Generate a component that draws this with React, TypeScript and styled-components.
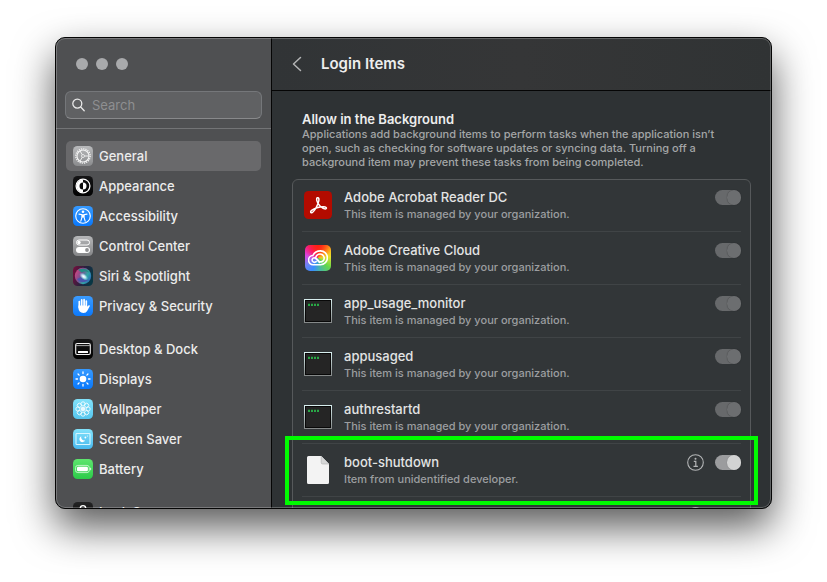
import React from "react";
import styled, { createGlobalStyle, css } from "styled-components";

const GlobalStyle = createGlobalStyle`
  *, *::before, *::after { box-sizing: border-box; }
  body {
    margin: 0;
    background: #fff;
    font-family: Inter, "Liberation Sans", sans-serif;
    font-size: 13px;
    line-height: 16px;
    color: #e3e4e4;
  }
  button, input { font: inherit; color: inherit; }
`;

const Desktop = styled.div`
  display: flex;
  height: 100vh;
  padding: 37px 55px 73px;
  overflow: hidden;
`;

const Window = styled.div`
  position: relative;
  flex: 1;
  display: flex;
  min-width: 0;
  border: 1px solid #050505;
  border-radius: 10px;
  overflow: hidden;
  background: #2e3234;
  box-shadow: 0 18px 40px rgba(0, 0, 0, 0.66);

  &::after {
    content: "";
    position: absolute;
    inset: 0;
    border: 1px solid rgba(255, 255, 255, 0.24);
    border-radius: 9px;
    pointer-events: none;
  }
`;

const Sidebar = styled.aside`
  flex: none;
  display: flex;
  flex-direction: column;
  width: 216px;
  border-right: 1px solid #050505;
  background: #4f5052;
  overflow: hidden;
`;

const SidebarTop = styled.div`
  flex: none;
  padding: 20px 9px 9px;
  border-bottom: 1px solid #737476;
`;

const TrafficLights = styled.div`
  display: flex;
  gap: 8px;
  padding: 0 11px;
  margin-bottom: 21px;
`;

const Light = styled.button`
  width: 12px;
  height: 12px;
  padding: 0;
  border: 0;
  border-radius: 50%;
  background: #a9aaac;
`;

const SearchField = styled.label`
  display: flex;
  align-items: center;
  gap: 7px;
  height: 28px;
  padding: 0 6px;
  border: 1px solid #75777a;
  border-bottom-color: #88898b;
  border-radius: 6px;
  background: #606163;

  svg { flex: none; }
`;

const SearchInput = styled.input`
  flex: 1;
  min-width: 0;
  padding: 0;
  border: 0;
  outline: 0;
  background: none;

  &::placeholder { color: #8e8f91; opacity: 1; }
`;

const Nav = styled.nav`
  flex: 1;
  display: flex;
  flex-direction: column;
  gap: 13px;
  min-height: 0;
  padding: 12px 10px 0;
  overflow: hidden;
`;

const NavGroup = styled.div`
  flex: none;
`;

const NavLink = styled.a<{ $selected?: boolean }>`
  display: flex;
  align-items: center;
  gap: 6px;
  height: 30px;
  padding: 0 7px;
  border-radius: 5px;
  color: #ececec;
  text-decoration: none;
  font-weight: 500;
  white-space: nowrap;
  ${(p) => p.$selected && css`background: #69696b;`}
`;

const Main = styled.main`
  flex: 1;
  display: flex;
  flex-direction: column;
  min-width: 0;
`;

const Header = styled.header`
  flex: none;
  display: flex;
  align-items: center;
  gap: 15px;
  height: 53px;
  padding: 0 16px;
  border-bottom: 1px solid #050505;
  background: linear-gradient(90deg, #313436, #353637 50%, #303334);
`;

const BackButton = styled.button`
  display: flex;
  align-items: center;
  justify-content: center;
  width: 18px;
  height: 24px;
  padding: 0;
  border: 0;
  background: none;
`;

const Title = styled.h1`
  margin: 0;
  font-size: 15px;
  font-weight: 600;
  line-height: 20px;
  color: #ededed;
`;

const Content = styled.section`
  flex: 1;
  min-height: 0;
  padding: 20px 20px 0;
  overflow: hidden;
`;

const Intro = styled.div`
  padding: 0 10px;
  margin-bottom: 10px;
`;

const SectionTitle = styled.h2`
  margin: 0;
  font-size: 13px;
  font-weight: 600;
  line-height: 16px;
  color: #ededed;
`;

const Description = styled.p`
  margin: 0;
  font-size: 11px;
  font-weight: 500;
  line-height: 14px;
  color: #a4a6a7;
`;

const List = styled.ul`
  margin: 0;
  padding: 0 9px;
  list-style: none;
  border: 1px solid #56595b;
  border-radius: 6px;
  background: #323638;
`;

const Row = styled.li`
  position: relative;
  display: flex;
  gap: 11px;
  height: 53px;
  padding: 10px 0 0 1px;
  border-bottom: 1px solid #404446;

  &:first-child {
    height: 52px;
    padding-top: 9px;
  }
`;

const IconSlot = styled.div`
  flex: none;
  display: flex;
  justify-content: center;
  width: 30px;
  height: 32px;
  align-items: center;
`;

const RowText = styled.div`
  flex: 1;
  min-width: 0;
  white-space: nowrap;
`;

const RowName = styled.div`
  line-height: 17px;
  font-weight: 500;
`;

const RowNote = styled.div`
  font-size: 11px;
  font-weight: 500;
  line-height: 16px;
  color: #9c9ea0;
`;

const Controls = styled.div`
  display: flex;
  align-items: center;
  gap: 11px;
  height: 17px;
`;

const InfoButton = styled.button`
  display: flex;
  padding: 0;
  border: 0;
  background: none;
`;

const Toggle = styled.input`
  appearance: none;
  display: flex;
  justify-content: flex-end;
  width: 26px;
  height: 15px;
  margin: 0;
  border-radius: 8px;
  background: #9b9c9e;

  &::before {
    content: "";
    width: 14px;
    height: 15px;
    border-radius: 8px;
    background: #d2d3d3;
    box-shadow: 0 0 1px rgba(0, 0, 0, 0.3);
  }

  &:disabled { background: #67696b; }
  &:disabled::before { background: #6c6e70; box-shadow: 0 0 1px rgba(0, 0, 0, 0.5); }
`;

const Highlight = styled.div`
  position: absolute;
  inset: -8px -17px -9px;
  border: 4px solid #00fb00;
  pointer-events: none;
`;

type TileProps = { id: string; from: string; to: string; children: React.ReactNode };

const Tile = ({ id, from, to, children }: TileProps) => (
  <svg width="20" height="20" viewBox="0 0 20 20" fill="none" aria-hidden="true">
    <defs>
      <linearGradient id={id} x1="0" y1="0" x2="0" y2="1">
        <stop offset="0" stopColor={from} />
        <stop offset="1" stopColor={to} />
      </linearGradient>
    </defs>
    <rect width="20" height="20" rx="4.5" fill={`url(#${id})`} />
    {children}
  </svg>
);

const spin = (n: number) => Array.from({ length: n }, (_, i) => (360 / n) * i);

const GearIcon = () => (
  <Tile id="gear" from="#b9babc" to="#8a8b8d">
    <circle cx="10" cy="10" r="7.2" stroke="#f4f4f4" strokeWidth="1.3" strokeDasharray="1.2 1.06" />
    <circle cx="10" cy="10" r="6" stroke="#f4f4f4" strokeWidth="1.1" />
    <circle cx="10" cy="10" r="1.5" stroke="#f4f4f4" strokeWidth="0.8" />
    <path d="M11.5 10h4.5M9.2 8.7 7 4.8M9.2 11.3 7 15.2" stroke="#f4f4f4" strokeWidth="0.9" />
  </Tile>
);

const AppearanceIcon = () => (
  <Tile id="appearance" from="#151516" to="#020202">
    <circle cx="10" cy="10" r="6.9" stroke="#fff" strokeWidth="1.3" />
    <path d="M10 3.5a6.5 6.5 0 0 0 0 13v-3a3.5 3.5 0 0 1 0-7z" fill="#fff" />
    <path d="M10 6.5a3.5 3.5 0 0 1 0 7z" fill="#fff" />
  </Tile>
);

const AccessibilityIcon = () => (
  <Tile id="accessibility" from="#369aff" to="#0a78fb">
    <circle cx="10" cy="10" r="7.3" stroke="#fff" strokeWidth="1.1" />
    <circle cx="10" cy="5.8" r="1.3" fill="#fff" />
    <path d="M6 8.1l3 .6v2.4l-1.2 4M14 8.1l-3 .6v2.4l1.2 4" stroke="#fff" strokeWidth="1.1" strokeLinecap="round" />
    <path d="M8.7 8.4h2.6v3.2H8.7z" fill="#fff" />
  </Tile>
);

const ControlCenterIcon = () => (
  <Tile id="control" from="#b5b6b8" to="#858688">
    <rect x="3.5" y="4" width="13" height="5" rx="2.5" stroke="#fff" strokeWidth="1" />
    <circle cx="6" cy="6.5" r="1.7" fill="#fff" />
    <rect x="3" y="11" width="14" height="6" rx="3" fill="#fff" />
    <circle cx="14" cy="14" r="1.9" fill="#909193" />
  </Tile>
);

const SiriIcon = () => (
  <svg width="20" height="20" viewBox="0 0 20 20" aria-hidden="true">
    <defs>
      <linearGradient id="siri-bg" x1="0" y1="0" x2="1" y2="0.3">
        <stop offset="0" stopColor="#7a0c3c" />
        <stop offset="0.6" stopColor="#27223f" />
        <stop offset="1" stopColor="#093644" />
      </linearGradient>
      <linearGradient id="siri-orb" x1="0" y1="0.2" x2="1" y2="0.7">
        <stop offset="0" stopColor="#d8467f" />
        <stop offset="0.4" stopColor="#7b4f91" />
        <stop offset="0.7" stopColor="#2fa8a5" />
        <stop offset="1" stopColor="#2d63bd" />
      </linearGradient>
      <radialGradient id="siri-glow">
        <stop offset="0" stopColor="#fff" />
        <stop offset="0.4" stopColor="#d8f4ff" stopOpacity="0.85" />
        <stop offset="1" stopColor="#7bd3ee" stopOpacity="0" />
      </radialGradient>
    </defs>
    <rect width="20" height="20" rx="4.5" fill="url(#siri-bg)" />
    <circle cx="10" cy="10" r="8.2" fill="url(#siri-orb)" />
    <path d="M5 3.8c5-2.6 10-.2 11.5 3.2-3-2-6-2-7.5-.2z" fill="#268b85" />
    <path d="M4 13c3.5 4.5 8.5 4 11.5.5-3 .8-6-.4-7-2.6z" fill="#4c55ad" />
    <ellipse cx="10.7" cy="10.5" rx="5.2" ry="3" transform="rotate(38 10.7 10.5)" fill="url(#siri-glow)" />
  </svg>
);

const HandIcon = () => (
  <Tile id="privacy" from="#3b9cff" to="#0c79fb">
    <path d="M6.3 5.5v6M8.7 3.9v6M11.1 3.7v6M13.3 5v6" stroke="#fff" strokeWidth="1.7" strokeLinecap="round" />
    <path d="M5.45 9.5h8.7v1.3l1.3-1.3c.8-.7 1.7 0 1.3.8l-2.3 4.2c-.9 1.7-2.2 2.5-4.1 2.5-3 0-4.9-1.9-4.9-4.9z" fill="#fff" />
  </Tile>
);

const DockIcon = () => (
  <Tile id="dock" from="#161617" to="#020202">
    <rect x="2.7" y="4.5" width="14.6" height="11" rx="1.5" stroke="#f1f1f1" strokeWidth="1.1" />
    <path d="M3 6.6h14" stroke="#a5a5a5" strokeWidth="1" />
    <rect x="5" y="12" width="10" height="2" rx="0.5" fill="#fff" />
  </Tile>
);

const DisplaysIcon = () => (
  <Tile id="displays" from="#369aff" to="#0a78fb">
    <circle cx="10" cy="10" r="3.3" fill="#fff" />
    {spin(8).map((a) => (
      <path key={a} d="M10 3v1.5" transform={`rotate(${a} 10 10)`} stroke="#fff" strokeWidth="1.3" strokeLinecap="round" />
    ))}
  </Tile>
);

const WallpaperIcon = () => (
  <Tile id="wallpaper" from="#82e2fa" to="#56c6ee">
    {spin(8).map((a) => (
      <circle key={a} cx="10" cy="4.9" r="2.1" transform={`rotate(${a} 10 10)`} stroke="#f3fcff" strokeWidth="0.9" />
    ))}
    <circle cx="10" cy="10" r="2.3" fill="#fff" fillOpacity="0.85" />
  </Tile>
);

const ScreenSaverIcon = () => (
  <Tile id="saver" from="#82e2fa" to="#48b8ee">
    <rect x="3" y="4.5" width="14" height="11" rx="0.8" stroke="#d8f6ff" strokeWidth="1.1" />
    <path d="M8.2 7.2a3.1 3.1 0 1 0 4 4.3 3.5 3.5 0 0 1-4-4.3z" fill="#fff" />
    <circle cx="12.4" cy="8.5" r="0.9" fill="#fff" />
    <circle cx="14.3" cy="7" r="0.5" fill="#fff" />
  </Tile>
);

const BatteryIcon = () => (
  <Tile id="battery" from="#5ee56e" to="#2ccb49">
    <rect x="2.6" y="6.4" width="13.6" height="7.2" rx="2.2" stroke="#c8f6ce" strokeWidth="0.9" />
    <rect x="4" y="7.7" width="10.9" height="4.6" rx="1.2" fill="#fff" />
    <path d="M17.1 8.7c.9.4.9 2.2 0 2.6z" fill="#e6fbe9" stroke="#e6fbe9" strokeWidth="0.5" />
  </Tile>
);

const LockIcon = () => (
  <Tile id="lock" from="#242425" to="#050505">
    <path d="M7.3 9V6.3a2.7 2.7 0 0 1 5.4 0V9" stroke="#fff" strokeWidth="1.4" />
    <rect x="5.5" y="9" width="9" height="7" rx="1.2" fill="#fff" />
  </Tile>
);

const AcrobatIcon = () => (
  <svg width="28" height="28" viewBox="0 0 28 28" fill="none" aria-hidden="true">
    <rect width="28" height="28" rx="4.5" fill="#b30b00" />
    <path
      d="M13.3 6.700c1.800-.5 2.300 2.200.6 6.100-1.500 3.600-4 8.200-6 8.900-1.300.4-1.800-.9-.6-2.100 2.500-2.300 8.300-4.200 12.700-3.900 2.700.2 3.200 2.200 1.200 2.200-3 0-7.400-4.200-8.300-8.100-.4-1.700-.2-2.900.4-3.100z"
      stroke="#fff"
      strokeWidth="1.5"
      strokeLinejoin="round"
    />
  </svg>
);

const CloudArt = styled.div`
  display: flex;
  align-items: center;
  justify-content: center;
  width: 26px;
  height: 26px;
  border-radius: 5px;
  background:
    radial-gradient(circle at 50% 0, #ff1c16 0, rgba(255, 28, 22, 0) 50%),
    conic-gradient(from 0deg, #ff3b16, #ffb51c 50deg, #e7e32c 85deg, #63d84b 130deg, #4bbb9b 165deg, #388eff 205deg, #7181f4 240deg, #d849e2 280deg, #f51c92 320deg, #ff3b16);
`;

const CreativeCloudIcon = () => (
  <CloudArt>
    <svg width="20" height="16" viewBox="0 0 20 16" fill="none" stroke="#fff" strokeWidth="1.6" strokeLinecap="round" aria-hidden="true">
      <path d="M5.400 14.700a4.600 4.600 0 0 1-.5-9.200C6.300 2.700 9.200.9 12.500.9a6.700 6.700 0 0 1 0 13.800z" />
      <path d="M8.200 11.700a2.600 2.600 0 0 1-3 .2 2.200 2.200 0 0 1 .9-4.100c1 0 1.700.6 2.400 1.400l3 3.200" />
      <path d="M8 6.600c1-2.100 3.800-3.300 6-2.100 2.400 1.300 2.900 4.400 1.100 6.400-1.300 1.400-3.200 1.300-4.400.1L7.500 7.600" />
    </svg>
  </CloudArt>
);

const ExecIcon = () => (
  <svg width="28" height="24" viewBox="0 0 28 24" fill="none" aria-hidden="true">
    <defs>
      <linearGradient id="exec-frame" x1="0" y1="0" x2="0" y2="1">
        <stop offset="0" stopColor="#d7eeee" />
        <stop offset="1" stopColor="#858989" />
      </linearGradient>
    </defs>
    <rect x="0.5" y="0.5" width="27" height="23" fill="#1d1f20" stroke="url(#exec-frame)" />
    <rect x="1.5" y="1.5" width="25" height="21" fill="#252525" stroke="#080808" />
    <path d="M4 6h11" stroke="#29a746" strokeWidth="2" strokeDasharray="2 1" />
    <path d="M4.500 4.500h10" stroke="#1a6d2e" strokeWidth="1" strokeDasharray="1 2" />
  </svg>
);

const DocumentIcon = () => (
  <svg width="22" height="28" viewBox="0 0 22 28" aria-hidden="true">
    <path d="M1.500 0h12.700L22 8v18.500a1.500 1.500 0 0 1-1.500 1.500h-19A1.500 1.500 0 0 1 0 26.500v-25A1.500 1.500 0 0 1 1.500 0z" fill="#f3f3f3" />
    <path d="M14.200 0v6.500A1.500 1.500 0 0 0 15.700 8H22z" fill="#d6d7d7" />
    <path d="M14.200 0v6.500A1.500 1.500 0 0 0 15.700 8H22" fill="none" stroke="#aeb0b0" strokeWidth="0.6" />
  </svg>
);

const navGroups = [
  [
    { name: "General", Icon: GearIcon },
    { name: "Appearance", Icon: AppearanceIcon },
    { name: "Accessibility", Icon: AccessibilityIcon },
    { name: "Control Center", Icon: ControlCenterIcon },
    { name: "Siri & Spotlight", Icon: SiriIcon },
    { name: "Privacy & Security", Icon: HandIcon },
  ],
  [
    { name: "Desktop & Dock", Icon: DockIcon },
    { name: "Displays", Icon: DisplaysIcon },
    { name: "Wallpaper", Icon: WallpaperIcon },
    { name: "Screen Saver", Icon: ScreenSaverIcon },
    { name: "Battery", Icon: BatteryIcon },
  ],
  [{ name: "Lock Screen", Icon: LockIcon }],
];

const managed = "This item is managed by your organization.";

type Item = { name: string; note: string; Icon: React.FC; own?: boolean; marked?: boolean };

const items: Item[] = [
  { name: "Adobe Acrobat Reader DC", note: managed, Icon: AcrobatIcon },
  { name: "Adobe Creative Cloud", note: managed, Icon: CreativeCloudIcon },
  { name: "app_usage_monitor", note: managed, Icon: ExecIcon },
  { name: "appusaged", note: managed, Icon: ExecIcon },
  { name: "authrestartd", note: managed, Icon: ExecIcon },
  { name: "boot-shutdown", note: "Item from unidentified developer.", Icon: DocumentIcon, own: true, marked: true },
  { name: "", note: "", Icon: DocumentIcon, own: true },
];

const ItemRow = ({ name, note, Icon, own, marked }: Item) => (
  <Row>
    <IconSlot><Icon /></IconSlot>
    <RowText>
      <RowName>{name}</RowName>
      <RowNote>{note}</RowNote>
    </RowText>
    <Controls>
      {own && (
        <InfoButton aria-label={`About ${name || "item"}`}>
          <svg width="17" height="17" viewBox="0 0 17 17" fill="none" stroke="#b3b5b6" aria-hidden="true">
            <circle cx="8.5" cy="8.5" r="7.8" strokeWidth="1.1" />
            <path d="M6.8 7.3h2v4.9M6.5 12.3h4.4" strokeWidth="1.2" />
            <circle cx="8.5" cy="4.8" r="1" fill="#b3b5b6" stroke="none" />
          </svg>
        </InfoButton>
      )}
      <Toggle type="checkbox" role="switch" defaultChecked disabled={!own} aria-label={`Allow ${name || "item"}`} />
    </Controls>
    {marked && <Highlight />}
  </Row>
);

export default function App() {
  return (
    <>
      <GlobalStyle />
      <Desktop>
        <Window>
          <Sidebar>
            <SidebarTop>
              <TrafficLights>
                <Light aria-label="Close" />
                <Light aria-label="Minimize" />
                <Light aria-label="Zoom" />
              </TrafficLights>
              <SearchField>
                <svg width="13" height="14" viewBox="0 0 13 14" fill="none" stroke="#e8e8e8" strokeWidth="1.3" strokeLinecap="round" aria-hidden="true">
                  <circle cx="5.3" cy="5.6" r="4.5" />
                  <path d="M8.7 9l3.5 3.7" />
                </svg>
                <SearchInput type="text" placeholder="Search" aria-label="Search" />
              </SearchField>
            </SidebarTop>
            <Nav>
              {navGroups.map((group) => (
                <NavGroup key={group[0].name}>
                  {group.map(({ name, Icon }) => (
                    <NavLink key={name} href="#" $selected={name === "General"}>
                      <Icon />
                      {name}
                    </NavLink>
                  ))}
                </NavGroup>
              ))}
            </Nav>
          </Sidebar>
          <Main>
            <Header>
              <BackButton aria-label="Back">
                <svg width="10" height="16" viewBox="0 0 10 16" fill="none" stroke="#b3b4b5" strokeWidth="1.5" strokeLinecap="round" strokeLinejoin="round" aria-hidden="true">
                  <path d="M8.5 1.5 1.5 8l7 6.5" />
                </svg>
              </BackButton>
              <Title>Login Items</Title>
            </Header>
            <Content>
              <Intro>
                <SectionTitle>Allow in the Background</SectionTitle>
                <Description>
                  Applications add background items to perform tasks when the application isn’t open, such as checking
                  for software updates or syncing data. Turning off a background item may prevent these tasks from
                  being completed.
                </Description>
              </Intro>
              <List>
                {items.map((item) => (
                  <ItemRow key={item.name || "next"} {...item} />
                ))}
              </List>
            </Content>
          </Main>
        </Window>
      </Desktop>
    </>
  );
}
